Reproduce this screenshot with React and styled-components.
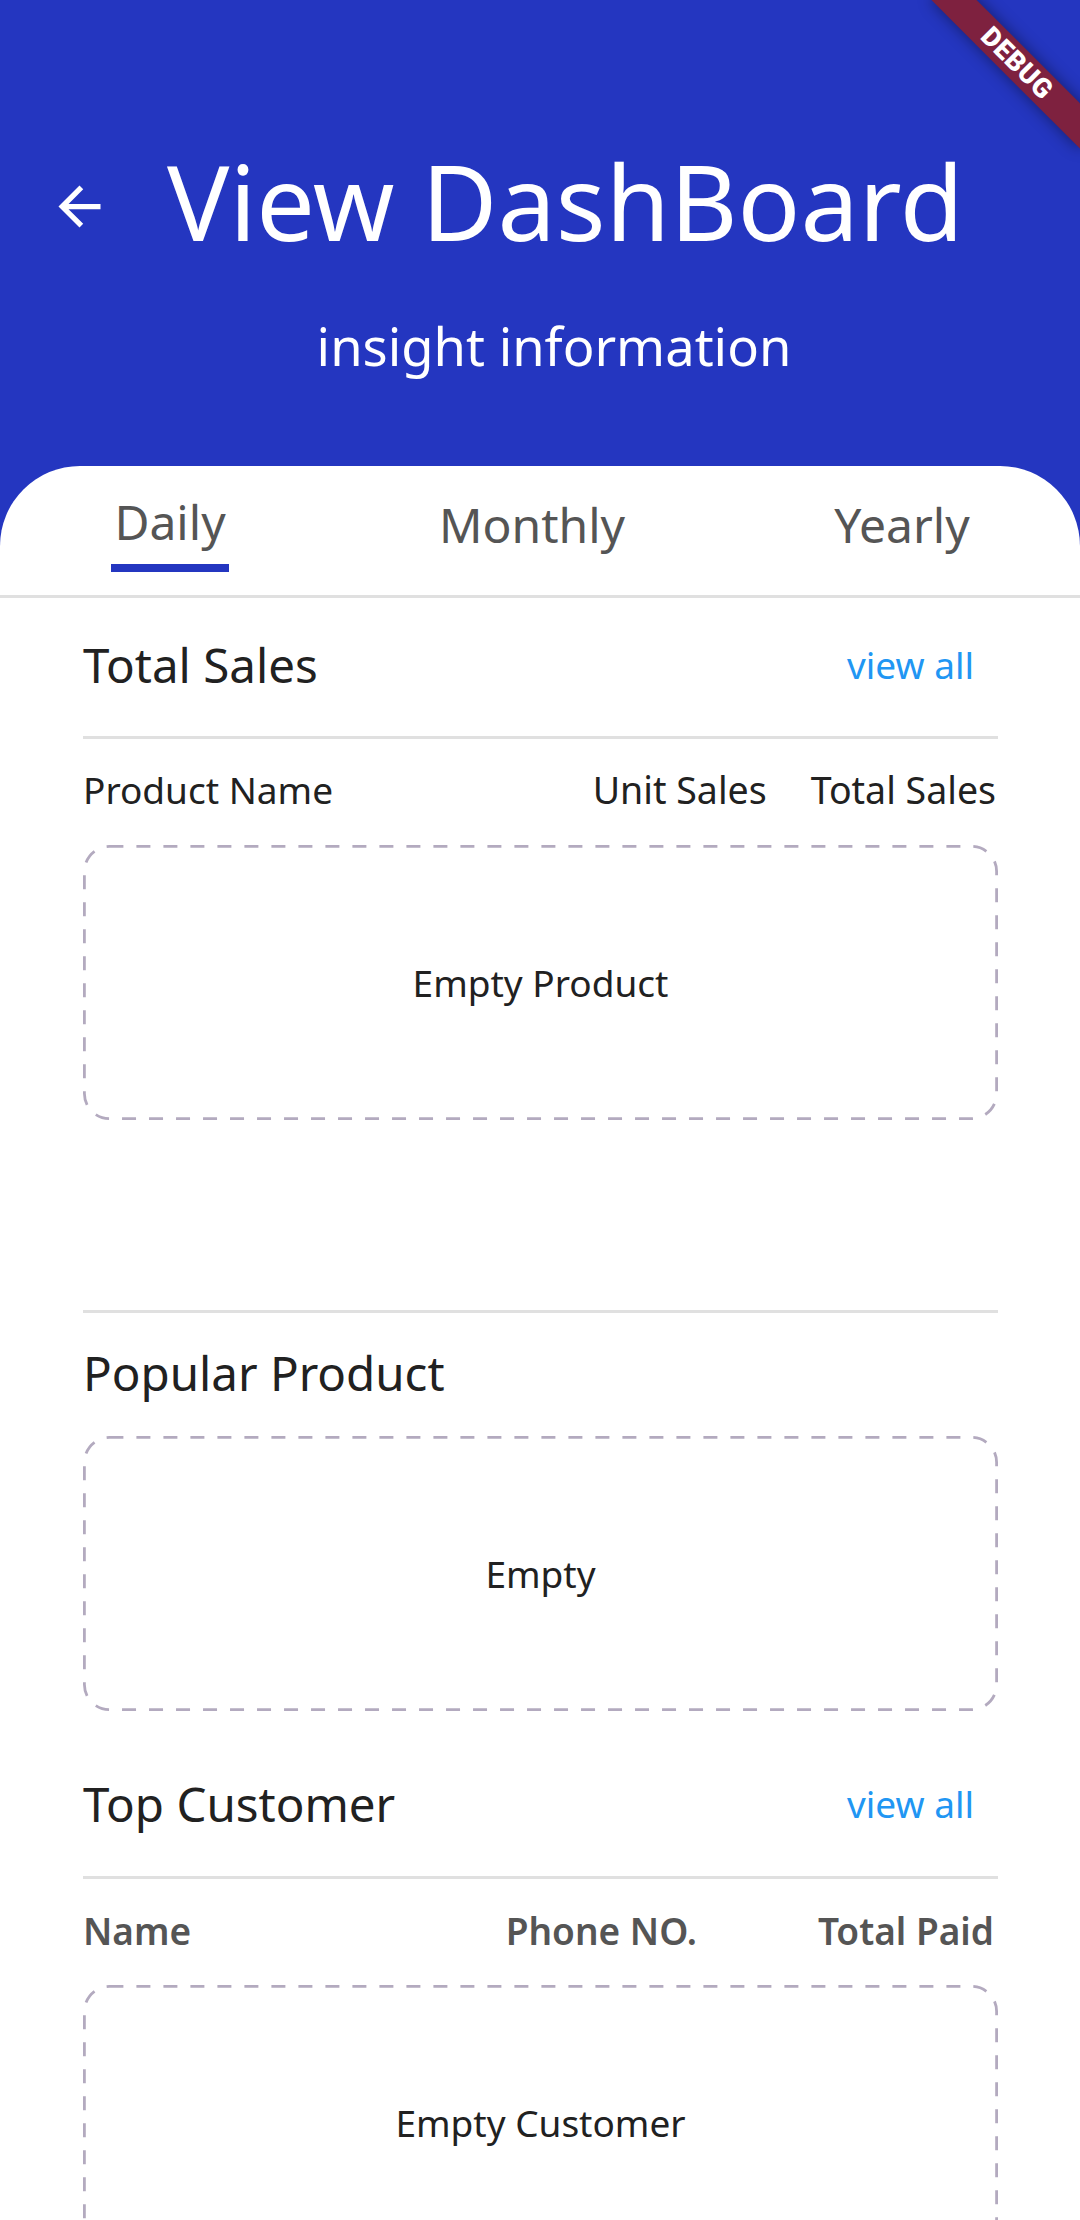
import React from 'react';
import styled, { createGlobalStyle } from 'styled-components';

const BLUE = '#2436c0';

const GlobalStyle = createGlobalStyle`
  html, body {
    margin: 0;
    padding: 0;
  }
  body {
    font-family: "Noto Sans", "Open Sans", sans-serif;
    background: #fff;
    overflow: hidden;
  }
`;

const tabs = ['Daily', 'Monthly', 'Yearly'];

export default function App() {
  return (
    <Page>
      <GlobalStyle />
      <Header>
        <TitleRow>
          <BackButton aria-label="back">
            <svg width="63" height="63" viewBox="0 0 24 24" fill="#fff">
              <path d="M20 11H7.83l5.59-5.59L12 4l-8 8 8 8 1.41-1.41L7.83 13H20v-2z" />
            </svg>
          </BackButton>
          <Title>View DashBoard</Title>
        </TitleRow>
        <Subtitle>insight information</Subtitle>
      </Header>

      <Card>
        <TabBar>
          {tabs.map((tab, i) => (
            <Tab key={tab} $active={i === 0}>
              <TabInner>
                <TabLabel>{tab}</TabLabel>
                <Indicator $active={i === 0} />
              </TabInner>
            </Tab>
          ))}
        </TabBar>

        <Content>
          <SectionHeader $top={35}>
            <SectionTitle>Total Sales</SectionTitle>
            <ViewAll>view all</ViewAll>
          </SectionHeader>
          <Divider $top={39} />
          <ProductColumns>
            <span>Product Name</span>
            <span>Unit Sales</span>
            <span>Total Sales</span>
          </ProductColumns>
          <EmptyBox label="Empty Product" top={30} />

          <Divider $top={190} />
          <SectionHeader $top={28}>
            <SectionTitle>Popular Product</SectionTitle>
          </SectionHeader>
          <EmptyBox label="Empty" top={31} />

          <SectionHeader $top={61}>
            <SectionTitle>Top Customer</SectionTitle>
            <ViewAll>view all</ViewAll>
          </SectionHeader>
          <Divider $top={40} />
          <CustomerColumns>
            <span>Name</span>
            <span>Phone NO.</span>
            <span>Total Paid</span>
          </CustomerColumns>
          <EmptyBox label="Empty Customer" top={29} />
        </Content>
      </Card>

      <DebugBanner>DEBUG</DebugBanner>
    </Page>
  );
}

function EmptyBox({ label, top }) {
  return (
    <Box $top={top}>
      <DashedFrame width="915" height="275" viewBox="0 0 915 275">
        <rect
          x="1.4"
          y="1.4"
          width="912.2"
          height="272.2"
          rx="25"
          fill="none"
          stroke="#b3aabf"
          strokeWidth="2.8"
          strokeDasharray="14 13"
        />
      </DashedFrame>
      <EmptyText>{label}</EmptyText>
    </Box>
  );
}

const Page = styled.div`
  position: relative;
  display: flex;
  flex-direction: column;
  width: 1080px;
  height: 2220px;
  overflow: hidden;
  background: ${BLUE};
`;

const Header = styled.header`
  padding: 129px 0 84px;
  color: #fff;
`;

const TitleRow = styled.div`
  display: flex;
  align-items: center;
  gap: 56px;
  padding-left: 48px;
`;

const BackButton = styled.div`
  display: flex;
  width: 63px;
  height: 63px;
  margin-top: 11px;
`;

const Title = styled.h1`
  margin: 0;
  font-size: 104px;
  font-weight: 400;
  line-height: 143px;
  white-space: nowrap;
`;

const Subtitle = styled.div`
  margin-top: 38px;
  padding-left: 28px;
  font-size: 52.5px;
  line-height: 72px;
  text-align: center;
`;

const Card = styled.main`
  flex: 1;
  background: #fff;
  border-radius: 80px 80px 0 0;
`;

const TabBar = styled.nav`
  display: grid;
  grid-template-columns: 340px 384px 1fr;
  height: 129px;
  border-bottom: 3px solid #e0e0e0;
`;

const Tab = styled.div`
  display: flex;
  justify-content: center;
  padding-top: ${p => (p.$active ? 24 : 27)}px;
`;

const TabInner = styled.div`
  display: flex;
  flex-direction: column;
  align-items: stretch;
`;

const TabLabel = styled.span`
  padding: 0 3px;
  font-size: 48px;
  line-height: 64px;
  color: #555;
`;

const Indicator = styled.div`
  height: 8px;
  margin-top: 10px;
  background: ${p => (p.$active ? BLUE : 'transparent')};
`;

const Content = styled.section`
  padding: 0 82px 0 83px;
`;

const SectionHeader = styled.div`
  display: flex;
  align-items: center;
  justify-content: space-between;
  height: 64px;
  margin-top: ${p => p.$top}px;
`;

const SectionTitle = styled.h2`
  margin: 0;
  font-size: 47.5px;
  font-weight: 400;
  line-height: 64px;
  color: #212121;
`;

const ViewAll = styled.a`
  margin-right: 24px;
  font-size: 37px;
  line-height: 50px;
  color: #2196f3;
  cursor: pointer;
`;

const Divider = styled.hr`
  height: 3px;
  margin: ${p => p.$top}px 0 0;
  border: 0;
  background: #e0e0e0;
`;

const ProductColumns = styled.div`
  display: grid;
  grid-template-columns: 1fr auto auto;
  column-gap: 44px;
  margin-top: 26px;
  padding-right: 2px;
  font-size: 37.5px;
  line-height: 50px;
  color: #212121;

  span:first-child {
    font-size: 37px;
  }
`;

const CustomerColumns = styled.div`
  display: grid;
  grid-template-columns: 1fr 310px 297px;
  margin-top: 27px;
  padding-right: 4px;
  font-size: 37px;
  font-weight: 600;
  line-height: 50px;
  color: #555;

  span:not(:first-child) {
    text-align: right;
  }
`;

const Box = styled.div`
  position: relative;
  display: flex;
  align-items: center;
  justify-content: center;
  height: 275px;
  margin-top: ${p => p.$top}px;
`;

const DashedFrame = styled.svg`
  position: absolute;
  top: 0;
  left: 0;
`;

const EmptyText = styled.span`
  font-size: 37px;
  line-height: 50px;
  color: #212121;
`;

const DebugBanner = styled.div`
  position: absolute;
  top: 47px;
  left: 912px;
  display: flex;
  align-items: center;
  justify-content: center;
  width: 210px;
  height: 32px;
  transform: rotate(45deg);
  background: #7e213f;
  box-shadow: 0 0 16px rgba(0, 0, 0, 0.45);
  color: #fff;
  font-family: Roboto, "Noto Sans", sans-serif;
  font-size: 27px;
  font-weight: 900;
  letter-spacing: 0.5px;
`;
